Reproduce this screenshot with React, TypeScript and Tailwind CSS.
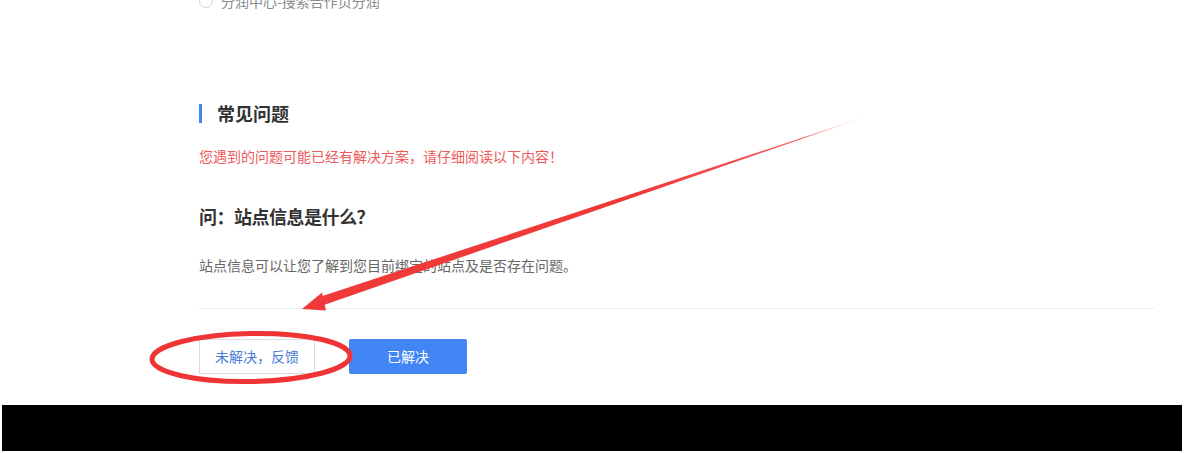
import React from "react";

const font = { fontFamily: '"Noto Sans CJK SC", "Noto Sans", sans-serif' };

// red hand-drawn annotation: tapered arrow + ellipse around the feedback button
const Markup = () => (
  <svg
    className="absolute inset-0 pointer-events-none"
    width="1184"
    height="453"
    viewBox="0 0 1184 453"
  >
    <defs>
      <linearGradient id="tail" x1="868" y1="117" x2="320" y2="302" gradientUnits="userSpaceOnUse">
        <stop offset="0" stopColor="#f03a3a" stopOpacity="0" />
        <stop offset="0.12" stopColor="#f03a3a" stopOpacity="0.8" />
        <stop offset="0.4" stopColor="#f03a3a" />
      </linearGradient>
    </defs>
    <polygon points="868,116 321,306 318,297.5" fill="url(#tail)" />
    <polygon points="302,309 322,292.5 326,310.5" fill="#f03a3a" />
    <ellipse
      cx="251"
      cy="357.5"
      rx="99"
      ry="24"
      fill="none"
      stroke="#ee3434"
      strokeWidth="5"
      transform="rotate(-1 251 357.5)"
    />
  </svg>
);

export default function App() {
  return (
    <div className="relative w-[1184px] h-[453px] overflow-hidden bg-white" style={font}>
      <div className="pl-[199px] pr-[30px]">
        {/* cut-off option from the previous section */}
        <div className="-mt-[10px] h-[22px] flex items-center">
          <span className="w-[14px] h-[14px] rounded-full border border-[#d5d5d5] bg-white" />
          <span className="ml-[8px] text-[14px] leading-[22px] text-[#8a8a8a]">
            分润中心-搜索合作页分润
          </span>
        </div>

        <div className="mt-[91px] h-[20px] flex items-center">
          <span className="w-[3px] h-[19px] bg-[#3f86f0]" />
          <h2 className="ml-[15px] text-[18px] leading-[20px] font-bold text-[#333]">常见问题</h2>
        </div>

        <p className="mt-[23px] text-[14px] leading-[20px] text-[#ec5a5a]">
          您遇到的问题可能已经有解决方案，请仔细阅读以下内容！
        </p>

        <h3 className="mt-[37px] text-[18px] leading-[26px] font-bold text-[#333] tracking-[-0.5px]">
          问：站点信息是什么？
        </h3>

        <p className="mt-[26px] text-[14px] leading-[20px] text-[#666]">
          站点信息可以让您了解到您目前绑定的站点及是否存在问题。
        </p>

        <div className="mt-[33px] h-px bg-[#ececec]" />

        <div className="mt-[30px] flex gap-[34px]">
          <button className="w-[116px] h-[35px] border border-[#dcdcdc] bg-white text-[14px] text-[#4a7bd6]">
            未解决，反馈
          </button>
          <button className="w-[118px] h-[35px] rounded-[2px] bg-[#4285f4] text-[14px] text-white">
            已解决
          </button>
        </div>
      </div>

      <div className="mt-[31px] mx-[2px] h-[46px] bg-black" />

      <Markup />
    </div>
  );
}
